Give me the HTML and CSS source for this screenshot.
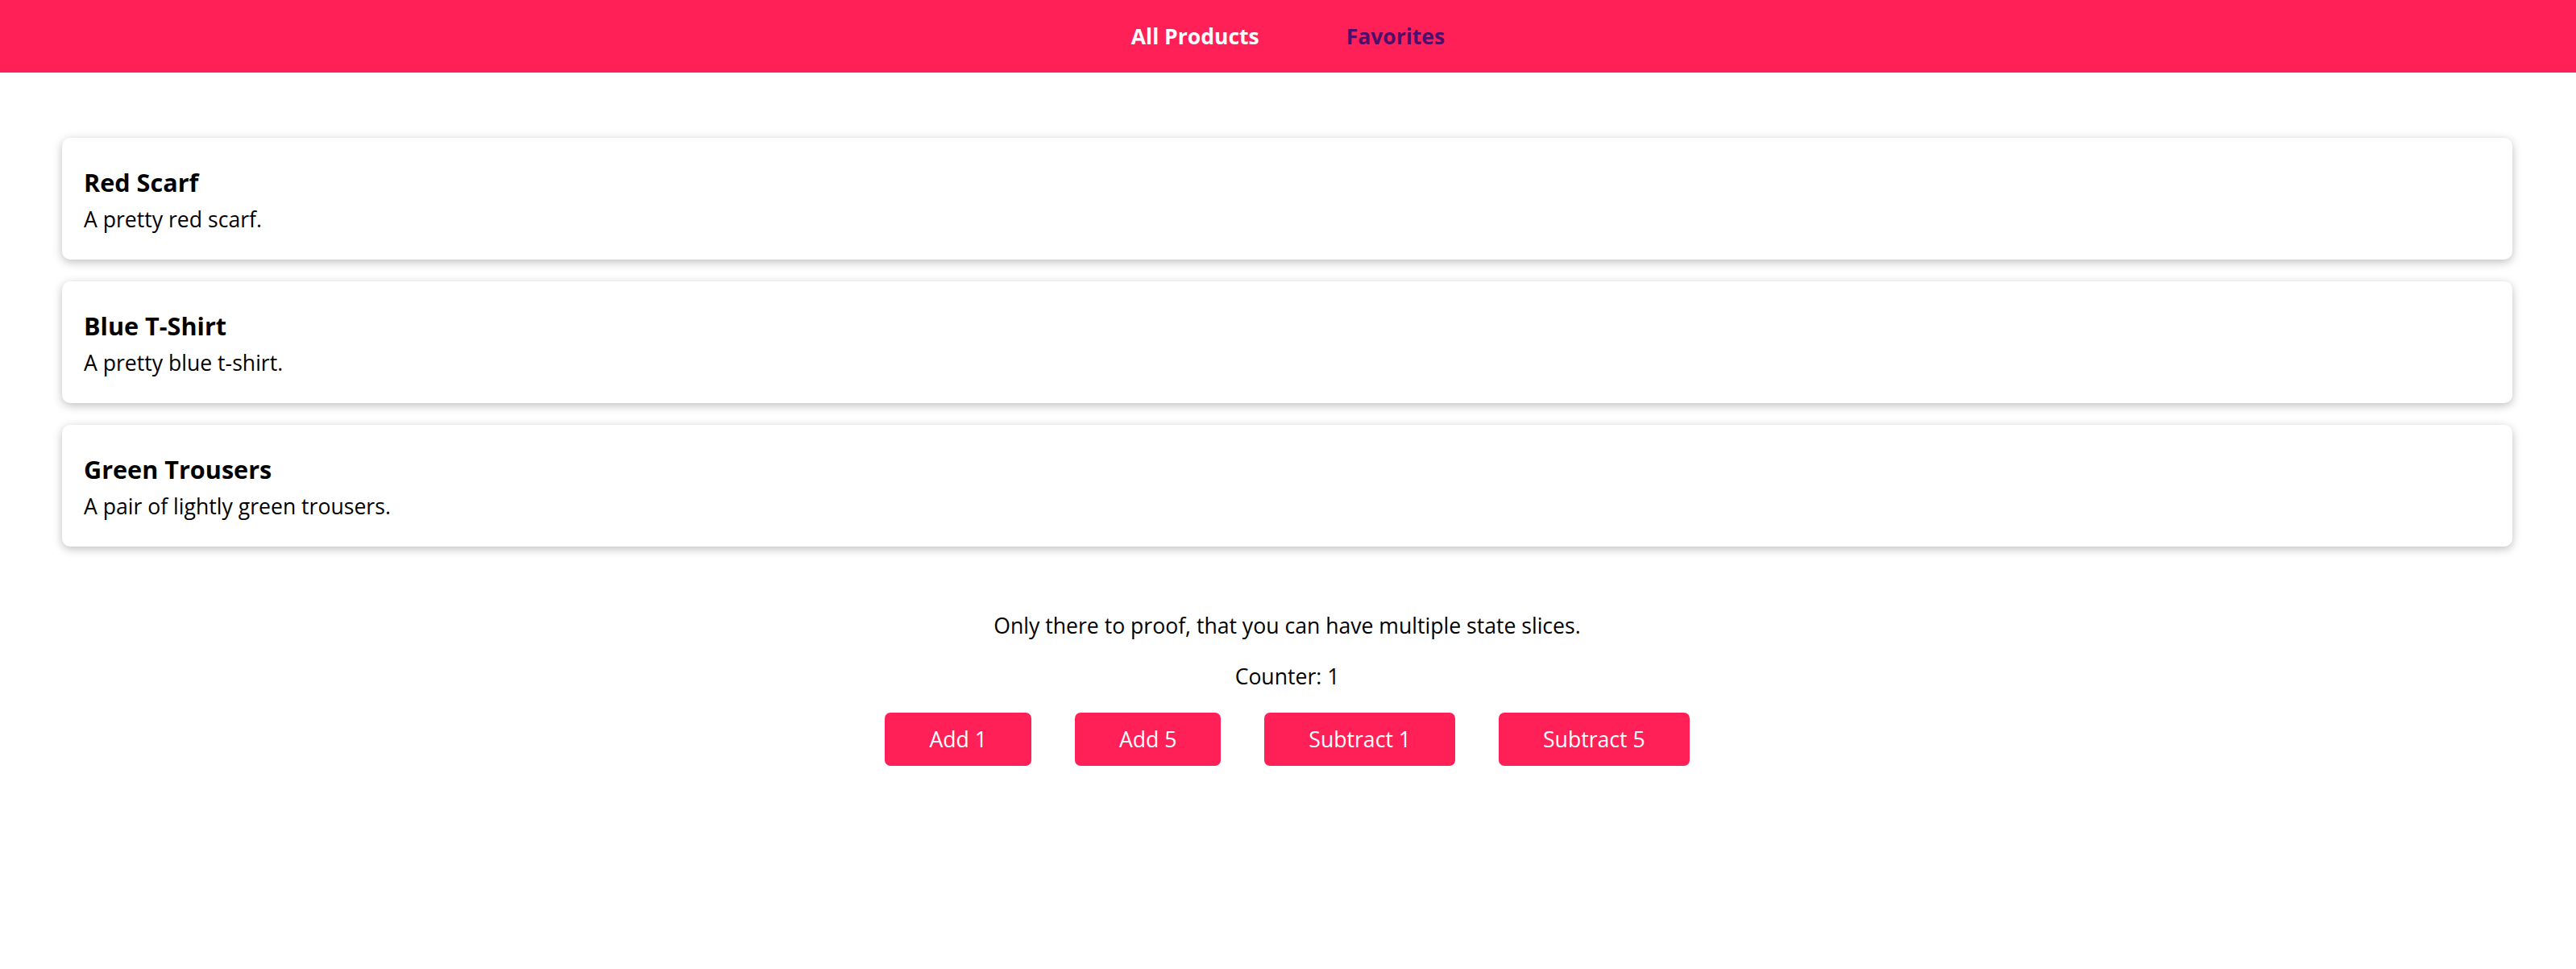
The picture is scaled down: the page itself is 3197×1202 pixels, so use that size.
FILE: index.html
```html
<!DOCTYPE html>
<html lang="en">
<head>
<meta charset="utf-8">
<title>Products</title>
<link rel="stylesheet" href="styles.css">
</head>
<body>
<header class="topbar">
  <nav class="nav">
    <a class="nav-link" href="#">All Products</a>
    <a class="nav-link nav-link--active" href="#">Favorites</a>
  </nav>
</header>
<main class="main">
  <ul class="product-list">
    <li class="card">
      <h2 class="card-title">Red Scarf</h2>
      <p class="card-desc">A pretty red scarf.</p>
    </li>
    <li class="card">
      <h2 class="card-title">Blue T-Shirt</h2>
      <p class="card-desc">A pretty blue t-shirt.</p>
    </li>
    <li class="card">
      <h2 class="card-title">Green Trousers</h2>
      <p class="card-desc">A pair of lightly green trousers.</p>
    </li>
  </ul>
  <section class="counter">
    <p class="counter-text">Only there to proof, that you can have multiple state slices.</p>
    <p class="counter-text counter-value">Counter: 1</p>
    <div class="counter-actions">
      <button class="btn">Add 1</button>
      <button class="btn">Add 5</button>
      <button class="btn">Subtract 1</button>
      <button class="btn">Subtract 5</button>
    </div>
  </section>
</main>
</body>
</html>
```
FILE: styles.css
```css
* {
  box-sizing: border-box;
}

html, body {
  margin: 0;
  padding: 0;
  background: #ffffff;
}

body {
  font-family: "Open Sans", "Noto Sans", sans-serif;
  font-size: 26.6px;
  color: #000000;
  line-height: normal;
}

.topbar {
  height: 90px;
  background: #ff2058;
  display: flex;
  align-items: center;
  justify-content: center;
}

.nav {
  display: flex;
  align-items: center;
  gap: 108px;
}

.nav-link {
  font-size: 26.5px;
  font-weight: 700;
  color: #ffffff;
  text-decoration: none;
}

.nav-link--active {
  color: #4f0e6b;
}

.main {
  padding: 81px 79px 0 77px;
}

.product-list {
  list-style: none;
  margin: 0;
  padding: 0;
  display: flex;
  flex-direction: column;
  gap: 27px;
}

.card {
  background: #ffffff;
  border-radius: 10px;
  box-shadow: 0 3px 12px rgba(0, 0, 0, 0.26);
  padding: 34px 27px 32px 27px;
}

.card-title {
  margin: 0;
  font-size: 30.6px;
  font-weight: 700;
}

.card-desc {
  margin: 7px 0 0 0;
  font-size: 26.6px;
}

.counter {
  margin-top: 80px;
  display: flex;
  flex-direction: column;
  align-items: center;
}

.counter-text {
  margin: 0;
}

.counter-value {
  margin-top: 27px;
}

.counter-actions {
  margin-top: 27px;
  display: flex;
  justify-content: center;
  gap: 54px;
}

.btn {
  font-family: "Open Sans", "Noto Sans", sans-serif;
  font-size: 26.6px;
  line-height: normal;
  color: #ffffff;
  background: #ff2058;
  border: none;
  border-radius: 7px;
  padding: 15px 55px;
  cursor: pointer;
}
```
